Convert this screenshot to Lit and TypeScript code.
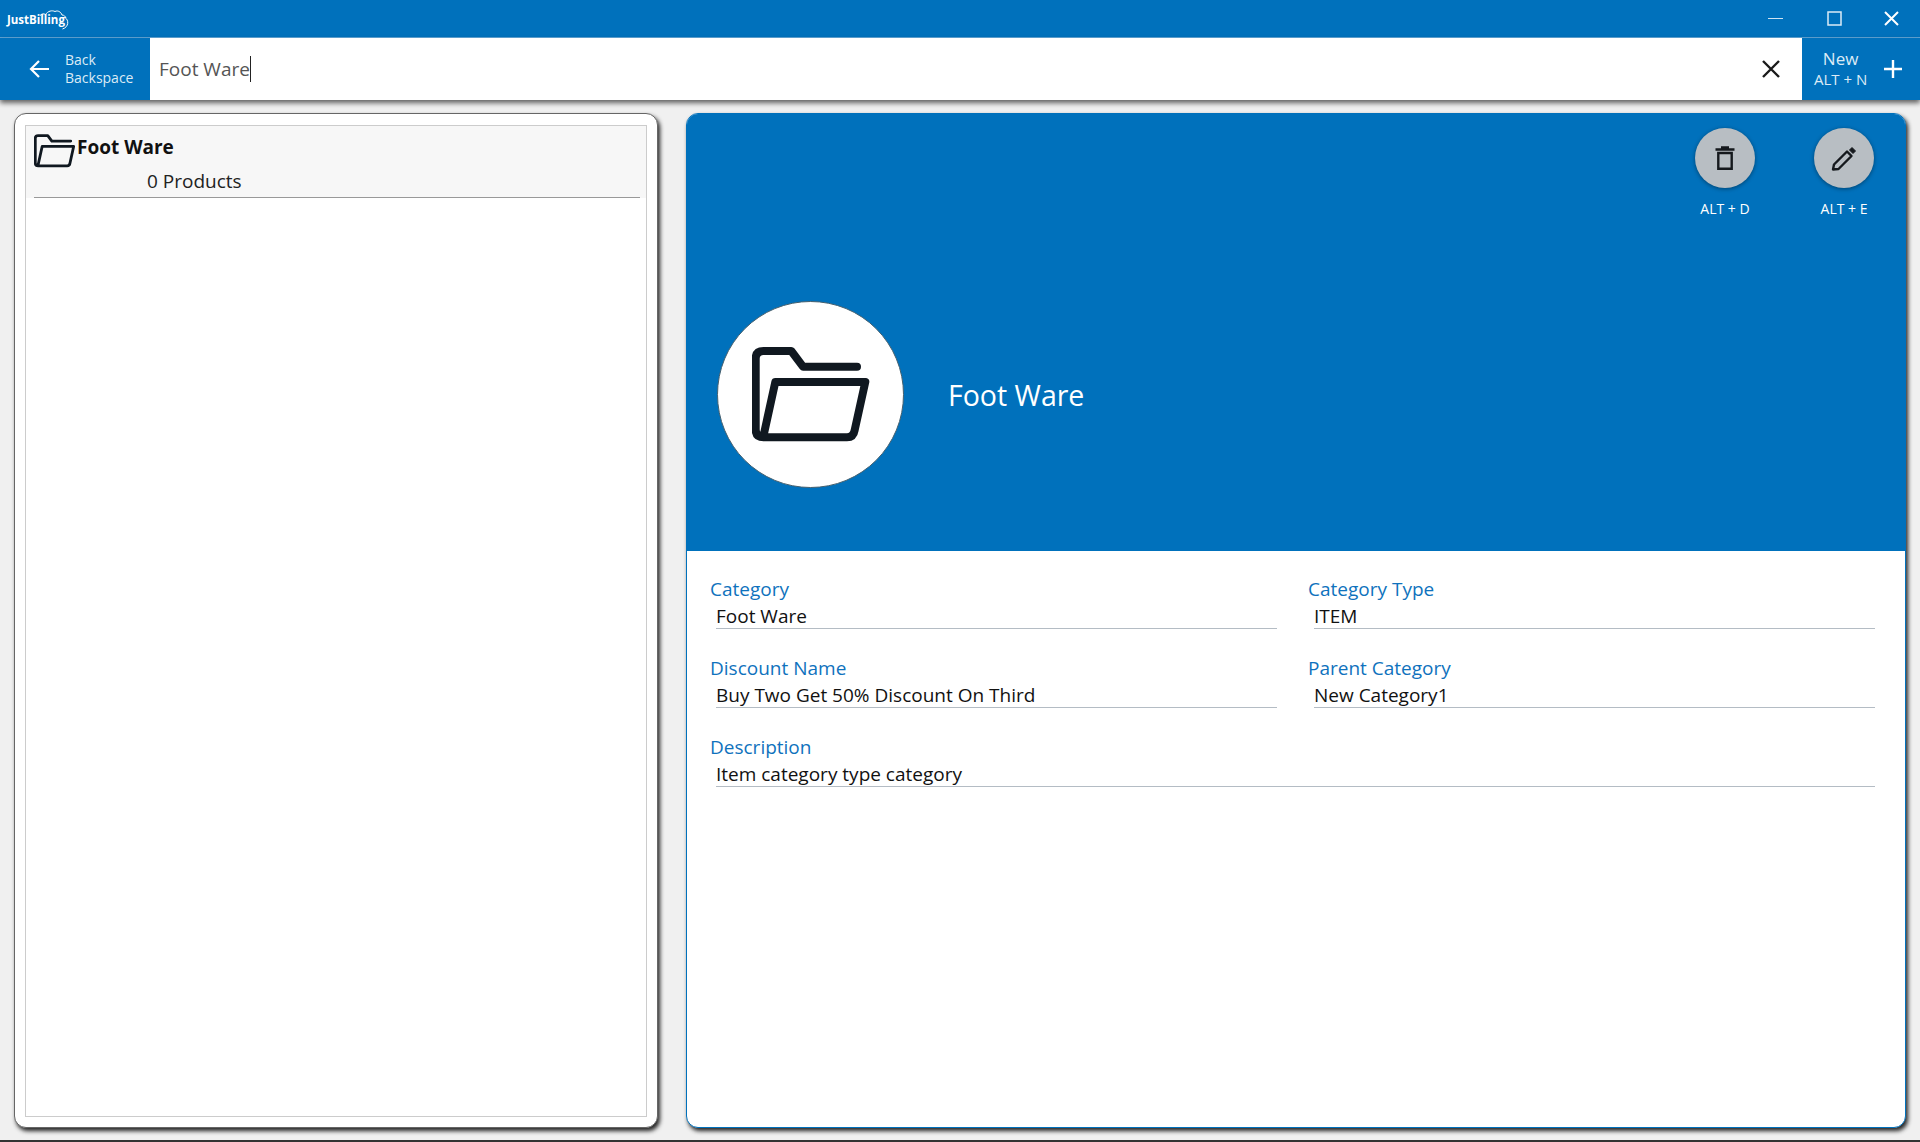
import { css, html, LitElement, svg } from 'lit';
import { customElement, property } from 'lit/decorators.js';

const folderPath = svg`<path d="M105 19.7H51L39.3 4H11.5Q3.7 4 3.7 11.7V82.5Q3.7 90.3 11.7 90.3H95Q101.5 90.3 102.7 83L113.3 35H23.3L11.7 88" fill="none" stroke="#101820" stroke-width="8" stroke-linecap="round" stroke-linejoin="round"/>`;

@customElement('detail-field')
export class DetailField extends LitElement {
    static styles = css`
        :host {
            display: block;
            height: 53px;
        }

        .label {
            height: 26px;
            line-height: 27px;
            font-size: 19px;
            color: #0f72bd;
        }

        .value {
            height: 26px;
            line-height: 28px;
            margin-left: 6px;
            font-size: 19px;
            color: #111;
            border-bottom: 1px solid #b4bcc4;
        }
    `;

    @property()
    label = '';

    @property()
    value = '';

    render() {
        return html`
            <div class="label">${this.label}</div>
            <div class="value">${this.value}</div>
        `;
    }
}

@customElement('app-root')
export class AppRoot extends LitElement {
    static styles = css`
        :host {
            display: flex;
            flex-direction: column;
            height: 1142px;
            background: #f0f0f0;
            font-family: 'Open Sans', 'Noto Sans', sans-serif;
            overflow: hidden;
        }

        .titlebar {
            height: 37px;
            flex: none;
            display: flex;
            align-items: center;
            justify-content: space-between;
            background: #0071bc;
            border-bottom: 1px solid #5fa5d6;
        }

        .logo {
            position: relative;
            margin-left: 7px;
            width: 64px;
            height: 28px;
            color: #fff;
            font-size: 11.5px;
            font-weight: 700;
        }

        .logo span {
            position: absolute;
            left: 0;
            top: 7px;
        }

        .logo svg {
            position: absolute;
            left: 0;
            top: 0;
        }

        .window-controls {
            display: flex;
            align-items: center;
            gap: 42px;
            margin-right: 21px;
        }

        .minimize {
            margin-right: 2px;
        }

        .toolbar {
            height: 62px;
            flex: none;
            display: flex;
            background: #0071bc;
            box-shadow: 0 3px 5px rgba(0, 0, 0, 0.6);
            position: relative;
            color: #dcebf6;
        }

        .back {
            width: 150px;
            display: flex;
            align-items: center;
            gap: 16px;
            padding-left: 29px;
            box-sizing: border-box;
            font-size: 14px;
            line-height: 18px;
        }

        .back svg {
            margin-bottom: 1px;
        }

        .search {
            flex: 1;
            background: #fff;
            display: flex;
            align-items: center;
            justify-content: space-between;
            padding: 0 22px 0 9px;
        }

        .query {
            font-size: 19px;
            color: #555;
            border-right: 1px solid #222;
            line-height: 26px;
        }

        .new {
            width: 118px;
            display: flex;
            align-items: center;
            box-sizing: border-box;
            padding-left: 12px;
            gap: 17px;
            text-align: center;
            font-size: 15px;
            line-height: 20px;
        }

        .new b {
            display: block;
            font-weight: 400;
            font-size: 17px;
        }

        .main {
            flex: 1;
            min-height: 0;
            display: flex;
            gap: 28px;
            padding: 13px 14px 12px 14px;
        }

        .card {
            border-radius: 12px;
            box-shadow: 2px 3px 4px rgba(0, 0, 0, 0.85);
            background: #fff;
            box-sizing: border-box;
        }

        .list-card {
            width: 644px;
            padding: 11px 10px 10px;
            display: flex;
            border: 1px solid #666;
        }

        .list {
            flex: 1;
            border: 1px solid #ccc;
        }

        .item {
            height: 72px;
            box-sizing: border-box;
            background: #f7f7f7;
            padding: 8px 6px 0 8px;
        }

        .item-inner {
            height: 63px;
            border-bottom: 1px solid #999;
        }

        .item-title {
            display: flex;
            align-items: center;
            font-size: 19px;
            font-weight: 700;
            color: #111;
            height: 34px;
            gap: 1px;
        }

        .item-title span {
            padding-bottom: 8px;
        }

        .item-count {
            padding-left: 113px;
            font-size: 19px;
            line-height: 26px;
            color: #222;
        }

        .detail-card {
            flex: 1;
            border: 1px solid #0071bc;
            overflow: hidden;
            display: flex;
            flex-direction: column;
        }

        .hero {
            height: 437px;
            flex: none;
            background: #0071bc;
            box-sizing: border-box;
            position: relative;
            display: flex;
            align-items: center;
            padding: 124px 0 0 30px;
            gap: 44px;
            color: #fff;
        }

        .avatar {
            width: 187px;
            height: 187px;
            box-sizing: border-box;
            border-radius: 50%;
            background: #fff;
            border: 1px solid #45606f;
            display: flex;
            align-items: center;
            justify-content: center;
            padding-left: 3px;
        }

        .hero-title {
            font-size: 28.5px;
        }

        .actions {
            position: absolute;
            top: 14px;
            right: 31px;
            display: flex;
            gap: 59px;
        }

        .action {
            width: 60px;
            display: flex;
            flex-direction: column;
            align-items: center;
            font-size: 14px;
            gap: 11px;
            white-space: nowrap;
        }

        .action-circle {
            width: 60px;
            height: 60px;
            border-radius: 50%;
            background: #b8bec3;
            box-shadow: 0 1px 4px rgba(0, 0, 0, 0.4);
            display: flex;
            align-items: center;
            justify-content: center;
        }

        .fields {
            display: grid;
            grid-template-columns: 1fr 1fr;
            column-gap: 31px;
            row-gap: 26px;
            padding: 25px 30px 0 23px;
        }

        .wide {
            grid-column: span 2;
        }

        .strip {
            height: 2px;
            flex: none;
            background: #333;
        }
    `;

    render() {
        return html`
            <div class="titlebar">
                <div class="logo">
                    <svg width="68" height="28" viewBox="0 0 68 28" fill="none" stroke="#fff" stroke-width="1">
                        <path d="M33 10.5C35 8.5 37 8.5 38.5 9.5C41 6 45 5 48 6.5C51 5 54 7 55 10C57 10 58.5 11.5 59 13" />
                        <path d="M58 12.5C62 15 62 22 55.5 24" />
                    </svg>
                    <span>JustBilling</span>
                </div>
                <div class="window-controls">
                    <svg class="minimize" width="15" height="15" viewBox="0 0 15 15"><path d="M0 7.5H15" stroke="#cfe3f2" /></svg>
                    <svg width="15" height="15" viewBox="0 0 15 15"><rect x="1" y="1" width="13" height="13" fill="none" stroke="#dcebf6" stroke-width="1.5" /></svg>
                    <svg width="15" height="15" viewBox="0 0 15 15"><path d="M1 1L14 14M14 1L1 14" stroke="#fff" stroke-width="2" /></svg>
                </div>
            </div>
            <div class="toolbar">
                <div class="back">
                    <svg width="20" height="20" viewBox="0 0 20 20" fill="none" stroke="#fff" stroke-width="2.2">
                        <path d="M20 10H2M10 2L2 10L10 18" />
                    </svg>
                    <div>Back<br />Backspace</div>
                </div>
                <div class="search">
                    <span class="query">Foot Ware</span>
                    <svg width="18" height="18" viewBox="0 0 18 18"><path d="M1 1L17 17M17 1L1 17" stroke="#1a1a1a" stroke-width="2.4" /></svg>
                </div>
                <div class="new">
                    <div><b>New</b>ALT + N</div>
                    <svg width="18" height="18" viewBox="0 0 18 18"><path d="M9 0V18M0 9H18" stroke="#fff" stroke-width="2.4" /></svg>
                </div>
            </div>
            <div class="main">
                <div class="card list-card">
                    <div class="list">
                        <div class="item">
                            <div class="item-inner">
                                <div class="item-title">
                                    <svg width="42" height="34" viewBox="0 0 120 96">${folderPath}</svg>
                                    <span>Foot Ware</span>
                                </div>
                                <div class="item-count">0 Products</div>
                            </div>
                        </div>
                    </div>
                </div>
                <div class="card detail-card">
                    <div class="hero">
                        <div class="avatar">
                            <svg width="120" height="96" viewBox="0 0 120 96">${folderPath}</svg>
                        </div>
                        <div class="hero-title">Foot Ware</div>
                        <div class="actions">
                            <div class="action">
                                <div class="action-circle">
                                    <svg width="22" height="24" viewBox="0 0 22 24" fill="none" stroke="#15191d" stroke-width="2.4">
                                        <path d="M4.3 7H17.7V22.8H4.3ZM1.5 3.5H20.5M7 1.5H15" />
                                    </svg>
                                </div>
                                <span>ALT + D</span>
                            </div>
                            <div class="action">
                                <div class="action-circle">
                                    <svg width="26" height="26" viewBox="0 0 26 26" fill="#15191d" stroke="#15191d" stroke-linejoin="round">
                                        <path d="M2 24.5L3 19.5L16 6.5L20.5 11L7.5 24Z" fill="none" stroke-width="2.4" />
                                        <path d="M18.5 5L21 2.5L24.5 6L22 8.5Z" stroke-width="1" />
                                    </svg>
                                </div>
                                <span>ALT + E</span>
                            </div>
                        </div>
                    </div>
                    <div class="fields">
                        <detail-field label="Category" value="Foot Ware"></detail-field>
                        <detail-field label="Category Type" value="ITEM"></detail-field>
                        <detail-field label="Discount Name" value="Buy Two Get 50% Discount On Third"></detail-field>
                        <detail-field label="Parent Category" value="New Category1"></detail-field>
                        <detail-field class="wide" label="Description" value="Item category type category"></detail-field>
                    </div>
                </div>
            </div>
            <div class="strip"></div>
        `;
    }
}
